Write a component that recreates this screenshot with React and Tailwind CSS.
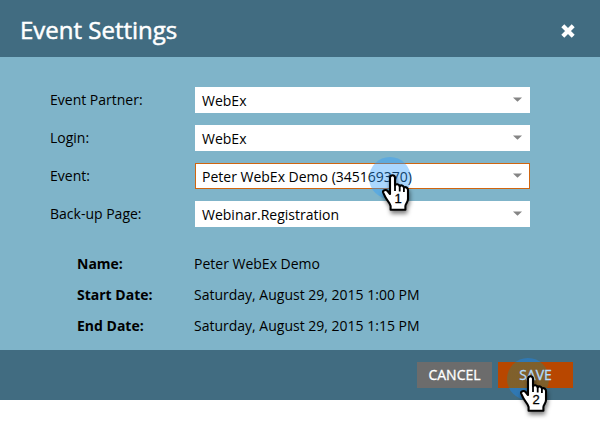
const FIELDS = [
  { label: 'Event Partner:', value: 'WebEx' },
  { label: 'Login:', value: 'WebEx' },
  { label: 'Event:', value: 'Peter WebEx Demo (345169370)', active: true },
  { label: 'Back-up Page:', value: 'Webinar.Registration' },
];

const DETAILS = [
  { label: 'Name:', value: 'Peter WebEx Demo' },
  { label: 'Start Date:', value: 'Saturday, August 29, 2015 1:00 PM' },
  { label: 'End Date:', value: 'Saturday, August 29, 2015 1:15 PM' },
];

// Numbered click marker: a translucent halo with a pointing hand over it.
function Pointer({ step, halo, className }) {
  return (
    <div className={`pointer-events-none absolute size-[42px] ${className}`}>
      <div className={`size-[42px] rounded-full ${halo}`} />
      <svg
        className="absolute left-[13px] top-[17px] z-20 overflow-visible drop-shadow-[1px_3px_2px_rgba(0,0,0,0.5)]"
        width="28"
        height="38"
        viewBox="0 0 28 38"
      >
        <path
          d="M8 20V3.8C8 .4 12.9.4 13 3.8V11.2C13.8 9.6 17.2 9.9 17.7 12.2C18.9 10.8 21.4 11.3 21.9 13.4C23.6 12.6 26 13.6 26 16V25C26 28.2 23.6 29.8 23.4 32V35.8H8.6V32C8 28.5 4.6 26 3.4 23.2L1.2 18.6C.4 16.2 3.8 15 5.6 17Z"
          fill="#fff"
          stroke="#000"
          strokeWidth="2.1"
          strokeLinejoin="round"
        />
        <path d="M13 10.5V17M17.7 12V17.5M21.9 13.4V18" fill="none" stroke="#000" strokeWidth="1.8" />
      </svg>
      <span className="absolute left-[23px] top-[34px] z-20 w-3 text-center font-['Liberation_Sans',sans-serif] text-[13px] leading-4 text-black [-webkit-text-stroke:0.3px_black]">
        {step}
      </span>
    </div>
  );
}

function Field({ label, value, active }) {
  return (
    <div className="flex h-[26px] items-center">
      <label className="w-[145px] shrink-0 text-[14px] leading-[26px]">{label}</label>
      <div
        className={`flex h-[26px] w-[335px] items-center justify-between border bg-white pl-[6px] pr-[7px] ${
          active ? 'relative border-[#d0650f]' : 'border-white'
        }`}
      >
        <span className="pt-[2px] text-[14px] leading-5">{value}</span>
        <svg className="-mt-px" width="9" height="5" viewBox="0 0 9 5">
          <path d="M0 .5H9L4.5 4.8Z" fill="#858585" />
        </svg>
        {active && <Pointer step="1" halo="bg-[#2a9bff]/40" className="left-[173px] top-[-7px]" />}
      </div>
    </div>
  );
}

export default function App() {
  return (
    <div className="h-[422px] w-[600px] overflow-hidden bg-white font-['Open_Sans',sans-serif] text-black">
      <header className="flex h-[57px] items-center justify-between bg-[#416c81] pl-5 pr-[25px]">
        <h1 className="pt-[3px] text-[24px] leading-8 text-white [-webkit-text-stroke:0.5px_white]">Event Settings</h1>
        <svg className="mt-[5px]" width="14" height="14" viewBox="0 0 14 14">
          <path d="M1.8 1.8L12.2 12.2M12.2 1.8L1.8 12.2" stroke="#fff" strokeWidth="4.2" />
        </svg>
      </header>
      <main className="h-[293px] bg-[#7fb4c9] pt-[30px]">
        <div className="flex flex-col gap-3 pl-[50px]">
          {FIELDS.map((f) => (
            <Field key={f.label} {...f} />
          ))}
        </div>
        <dl className="mt-[21px] pl-[77px] text-[14px] leading-[31px]">
          {DETAILS.map((d) => (
            <div key={d.label} className="flex">
              <dt className="w-[117px] font-bold">{d.label}</dt>
              <dd>{d.value}</dd>
            </div>
          ))}
        </dl>
      </main>
      <footer className="flex h-[50px] items-center justify-end gap-[6px] bg-[#416c81] pr-[27px] text-[14px] text-white">
        <button className="h-[26px] w-[75px] bg-[#6c6c6c] leading-[26px] [-webkit-text-stroke:0.3px_white]">CANCEL</button>
        <button className="relative h-[26px] w-[75px] bg-[#b84700] leading-[26px]">
          <span className="relative z-10 text-[#b4dcff] [-webkit-text-stroke:0.3px_#b4dcff]">SAVE</span>
          <Pointer
            step="2"
            halo="bg-[linear-gradient(#168aff66_4px,#2a856e66_4px,#2a856e66_30px,#168aff66_30px)]"
            className="left-[9px] top-[-4px]"
          />
        </button>
      </footer>
    </div>
  );
}
